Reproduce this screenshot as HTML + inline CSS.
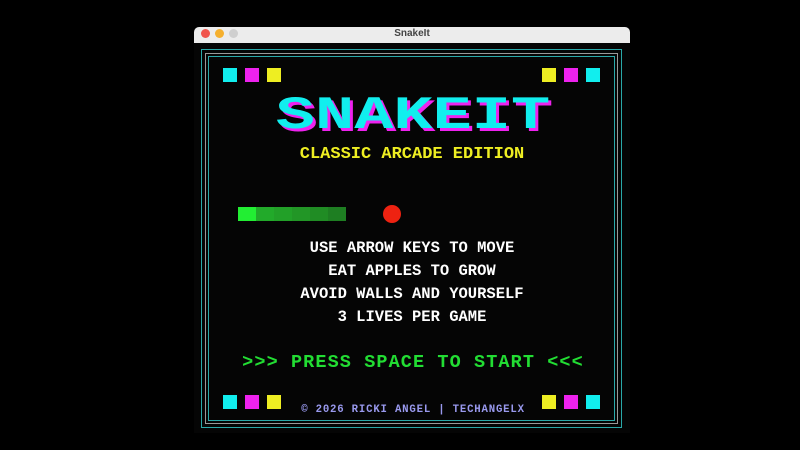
<html><head><style>
body{margin:0;width:800px;height:450px;background:#000;position:relative;overflow:hidden;font-family:"Liberation Mono",monospace;font-weight:bold}
.a{position:absolute}
.sq{position:absolute;width:14px;height:14px}
.c{background:#11eeee}.m{background:#ee22ee}.y{background:#eeee22}
.t{position:absolute;left:194px;width:436px;text-align:center;white-space:nowrap}
</style></head><body>
<div class="a" style="left:194px;top:27px;width:436px;height:16px;background:#ececec;border-radius:5px 5px 0 0;border-bottom:1px solid #ccc"></div>
<div class="a" style="left:201px;top:29px;width:9px;height:9px;border-radius:50%;background:#f0544c"></div>
<div class="a" style="left:215px;top:29px;width:9px;height:9px;border-radius:50%;background:#f5b02e"></div>
<div class="a" style="left:229px;top:29px;width:9px;height:9px;border-radius:50%;background:#cfcfcf"></div>
<div class="t" style="top:28px;font:bold 10px 'Liberation Sans',sans-serif;color:#444">SnakeIt</div>
<div class="a" style="left:194px;top:43px;width:436px;height:390px;background:#050505"></div>
<div class="a" style="left:201px;top:49px;width:419px;height:377px;border:1px solid #2aa9a9"></div>
<div class="a" style="left:205px;top:53px;width:411px;height:369px;border:1px solid #999"></div>
<div class="a" style="left:208px;top:56px;width:405px;height:363px;border:1px solid #2aa9a9"></div>
<div class="sq c" style="left:223px;top:68px"></div><div class="sq m" style="left:245px;top:68px"></div><div class="sq y" style="left:267px;top:68px"></div>
<div class="sq y" style="left:542px;top:68px"></div><div class="sq m" style="left:564px;top:68px"></div><div class="sq c" style="left:586px;top:68px"></div>
<div class="sq c" style="left:223px;top:395px"></div><div class="sq m" style="left:245px;top:395px"></div><div class="sq y" style="left:267px;top:395px"></div>
<div class="sq y" style="left:542px;top:395px"></div><div class="sq m" style="left:564px;top:395px"></div><div class="sq c" style="left:586px;top:395px"></div>
<div class="t" style="top:93px;left:198px;font-size:46px;color:#ee22ee;transform:scaleX(1.42)">SNAKEIT</div>
<div class="t" style="top:90px;left:195px;font-size:46px;color:#11eeee;transform:scaleX(1.42)">SNAKEIT</div>
<div class="t" style="top:145px;font-size:17px;color:#eeee22">CLASSIC ARCADE EDITION</div>
<div class="a" style="left:238px;top:207px;width:18px;height:14px;background:#22ee33"></div>
<div class="a" style="left:256px;top:207px;width:18px;height:14px;background:#22aa2a"></div>
<div class="a" style="left:274px;top:207px;width:18px;height:14px;background:#22a028"></div>
<div class="a" style="left:292px;top:207px;width:18px;height:14px;background:#229626"></div>
<div class="a" style="left:310px;top:207px;width:18px;height:14px;background:#208c24"></div>
<div class="a" style="left:328px;top:207px;width:18px;height:14px;background:#1e7e22"></div>
<div class="a" style="left:383px;top:205px;width:18px;height:18px;border-radius:50%;background:#ee2211"></div>
<div class="t" style="top:237px;font-size:15.5px;color:#fff;line-height:23px">USE ARROW KEYS TO MOVE<br>EAT APPLES TO GROW<br>AVOID WALLS AND YOURSELF<br>3 LIVES PER GAME</div>
<div class="t" style="top:352px;left:195px;font-size:18.5px;letter-spacing:1.1px;color:#22dd33">&gt;&gt;&gt; PRESS SPACE TO START &lt;&lt;&lt;</div>
<div class="t" style="top:404px;left:195px;font-size:10.7px;letter-spacing:0.8px;color:#9999ee">© 2026 RICKI ANGEL | TECHANGELX</div>
</body></html>
